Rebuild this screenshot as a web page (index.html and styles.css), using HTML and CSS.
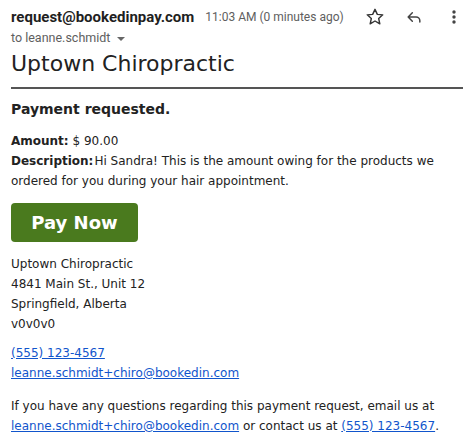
FILE: index.html
```html
<!DOCTYPE html>
<html>
<head>
<meta charset="utf-8">
<link rel="stylesheet" href="styles.css">
</head>
<body>
<div class="mail">
  <div class="head">
    <div class="row1">
      <span class="from">request@bookedinpay.com</span>
      <span class="time">11:03 AM (0 minutes ago)</span>
      <span class="icons">
        <svg class="ic star" width="20" height="20" viewBox="0 0 24 24"><path d="M12 2.8l2.8 6 6.5.6-4.9 4.4 1.4 6.4-5.8-3.4-5.8 3.4 1.4-6.4-4.9-4.4 6.5-.6z" fill="none" stroke="#333" stroke-width="1.7" stroke-linejoin="round"/></svg>
        <svg class="ic reply" width="20" height="20" viewBox="0 0 24 24"><path d="M10 7L5 12l5 5M5.5 12h9a4.5 4.5 0 0 1 4.5 4.5V18" fill="none" stroke="#444" stroke-width="1.8" stroke-linecap="round" stroke-linejoin="round"/></svg>
        <svg class="ic dots" width="8" height="20" viewBox="0 0 8 20"><circle cx="4" cy="5" r="1.7" fill="#444"/><circle cx="4" cy="10" r="1.7" fill="#444"/><circle cx="4" cy="15" r="1.7" fill="#444"/></svg>
      </span>
    </div>
    <div class="to">to leanne.schmidt <span class="caret"></span></div>
  </div>
  <div class="body">
    <h1 class="title">Uptown Chiropractic</h1>
    <h2 class="sub">Payment requested.</h2>
    <p class="info"><b>Amount:</b> $ 90.00<br><b class="lbl">Description:</b>Hi Sandra! This is the amount owing for the products we ordered for you during your hair appointment.</p>
    <a class="pay" href="#">Pay Now</a>
    <p class="addr">Uptown Chiropractic<br>4841 Main St., Unit 12<br>Springfield, Alberta<br>v0v0v0</p>
    <p class="contact"><a href="#">(555) 123-4567</a><br><a href="#">leanne.schmidt+chiro@bookedin.com</a></p>
    <p class="foot">If you have any questions regarding this payment request, email us at <a href="#">leanne.schmidt+chiro@bookedin.com</a> or contact us at <a href="#">(555) 123-4567</a>.</p>
  </div>
</div>
</body>
</html>
```

FILE: styles.css
```css
html, body { margin: 0; padding: 0; background: #fff; }
.mail { padding: 0 0 0 11px; width: 452px; }
.head { font-family: Roboto, "Liberation Sans", sans-serif; }
.row1 { display: flex; align-items: center; height: 24px; padding-top: 5px; }
.from { font-weight: bold; font-size: 15px; color: #1f1f1f; }
.time { font-size: 12px; color: #5e5e5e; margin-left: 11px; }
.icons { display: flex; align-items: center; margin-left: auto; }
.ic { display: block; }
.star { margin-right: 19px; }
.reply { margin-right: 26px; }
.dots { margin-right: 5px; }
.to { font-size: 12.5px; color: #5e5e5e; height: 16px; line-height: 16px; margin-top: 1px; }
.caret { display: inline-block; width: 0; height: 0; border-left: 4px solid transparent; border-right: 4px solid transparent; border-top: 4px solid #666; vertical-align: middle; margin-left: 3px; }
.body { font-family: "DejaVu Sans", Verdana, sans-serif; color: #222; font-size: 12px; line-height: 20px; }
.title { font-size: 22px; font-weight: normal; margin: 1px 0 0; line-height: 34px; padding-bottom: 6px; border-bottom: 2px solid #555; color: #222; }
.sub { font-size: 14px; margin: 10px 0 0; line-height: 20px; }
.info { margin: 12px 0 0; }
.lbl { margin-right: 1px; }
.pay { display: inline-block; margin-top: 12px; width: 127px; height: 39px; line-height: 39px; text-align: center; background: #4a7a1e; color: #fff; font-weight: bold; font-size: 18px; text-decoration: none; border-radius: 4px; }
.addr { margin: 12px 0 0; }
.contact { margin: 9px 0 0; }
a { color: #1155cc; }
.foot { margin: 13px 0 0; }
```
